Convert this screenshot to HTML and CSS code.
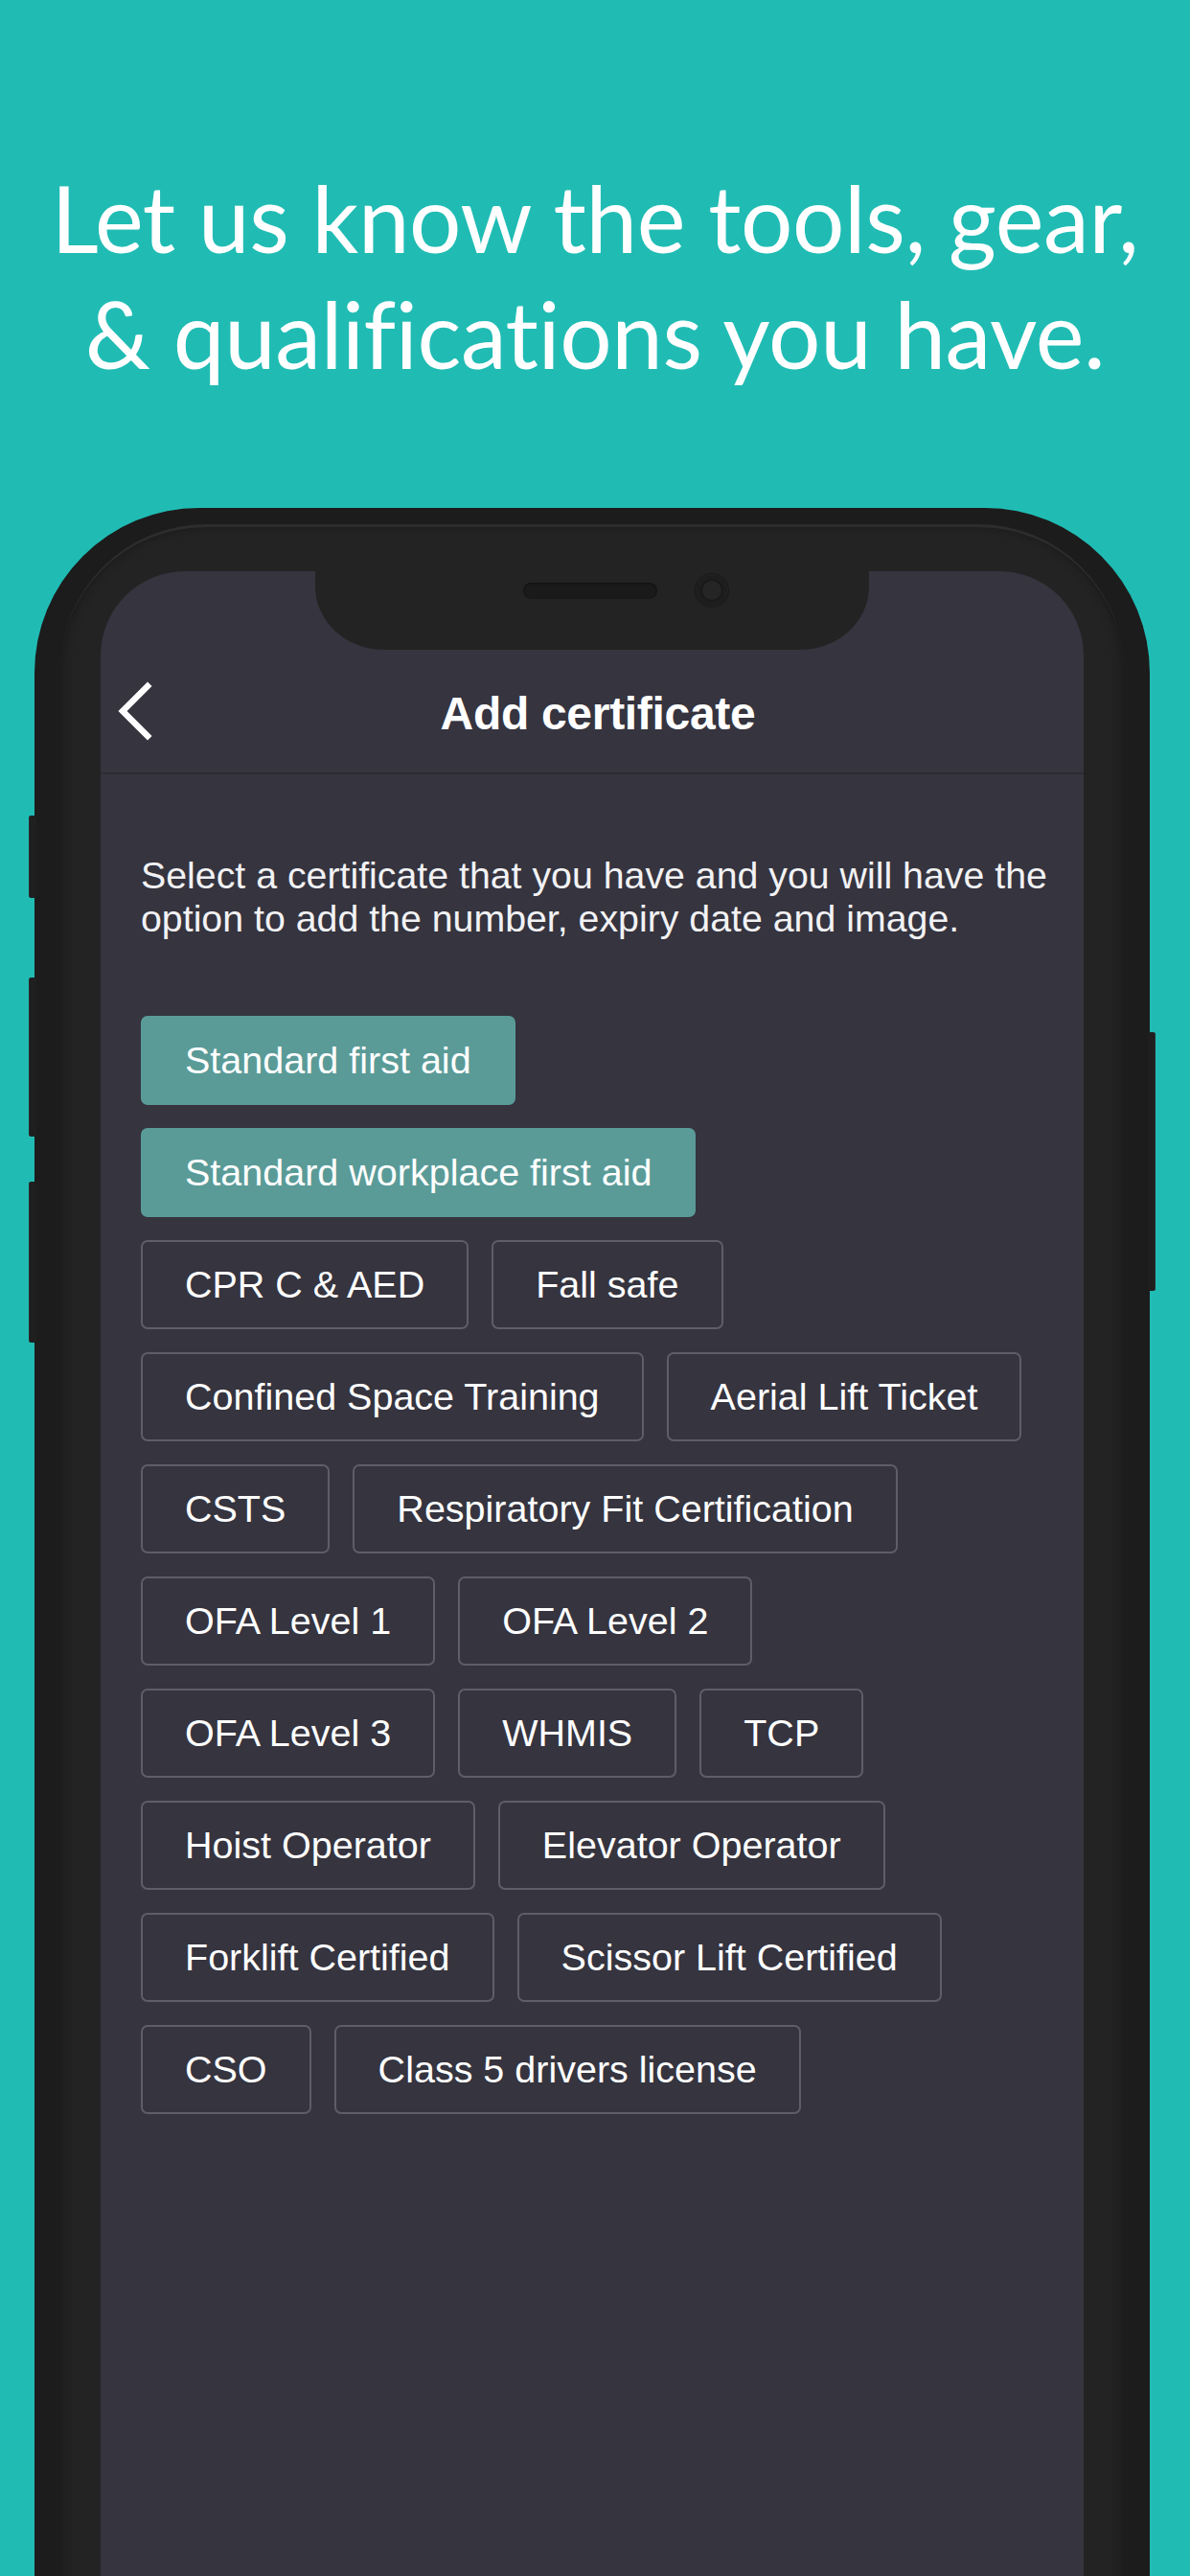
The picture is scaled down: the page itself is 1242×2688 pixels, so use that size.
FILE: index.html
```html
<!DOCTYPE html>
<html lang="en">
<head>
<meta charset="utf-8">
<title>Add certificate</title>
<link rel="stylesheet" href="styles.css">
</head>
<body>
<div class="page">
  <header class="headline">
    <h1>Let us know the tools, gear,<br>&amp; qualifications you have.</h1>
  </header>
  <div class="phone">
    <span class="side-btn btn-mute"></span>
    <span class="side-btn btn-vol-up"></span>
    <span class="side-btn btn-vol-down"></span>
    <span class="side-btn btn-power"></span>
    <div class="bezel">
      <div class="screen">
        <div class="notch">
          <span class="speaker"></span>
          <span class="camera"><span class="lens"></span></span>
        </div>
        <nav class="navbar">
          <svg class="back" width="44" height="64" viewBox="0 0 44 64" aria-hidden="true">
            <path d="M35 6 L9 32 L35 58" fill="none" stroke="#ffffff" stroke-width="6.5" stroke-linecap="square" stroke-linejoin="miter"/>
          </svg>
          <h2 class="title">Add certificate</h2>
        </nav>
        <main class="content">
          <p class="intro">Select a certificate that you have and you will have the option to add the number, expiry date and image.</p>
          <div class="chips">
            <div class="row"><span class="chip selected">Standard first aid</span></div>
            <div class="row"><span class="chip selected">Standard workplace first aid</span></div>
            <div class="row"><span class="chip">CPR C &amp; AED</span><span class="chip">Fall safe</span></div>
            <div class="row"><span class="chip">Confined Space Training</span><span class="chip">Aerial Lift Ticket</span></div>
            <div class="row"><span class="chip">CSTS</span><span class="chip">Respiratory Fit Certification</span></div>
            <div class="row"><span class="chip">OFA Level 1</span><span class="chip">OFA Level 2</span></div>
            <div class="row"><span class="chip">OFA Level 3</span><span class="chip">WHMIS</span><span class="chip">TCP</span></div>
            <div class="row"><span class="chip">Hoist Operator</span><span class="chip">Elevator Operator</span></div>
            <div class="row"><span class="chip">Forklift Certified</span><span class="chip">Scissor Lift Certified</span></div>
            <div class="row"><span class="chip">CSO</span><span class="chip">Class 5 drivers license</span></div>
          </div>
        </main>
      </div>
    </div>
  </div>
</div>
</body>
</html>
```
FILE: styles.css
```css
* { box-sizing: border-box; }
html, body {
  margin: 0;
  padding: 0;
}
body {
  background: #20bcb4;
  width: 1242px;
  height: 2688px;
  overflow: hidden;
}
.page {
  width: 1242px;
  height: 2688px;
  overflow: hidden;
}
.headline {
  height: 530px;
  padding-top: 166px;
}
.headline h1 {
  margin: 0;
  text-align: center;
  color: #ffffff;
  font-family: Lato, "Open Sans", sans-serif;
  font-weight: 400;
  font-size: 96px;
  line-height: 121px;
  letter-spacing: -0.4px;
}
.phone {
  position: relative;
  margin-left: 36px;
  width: 1164px;
  height: 2200px;
  background: #1c1c1c;
  border-radius: 172px 172px 0 0;
  padding: 17px 27px 0;
}
.side-btn {
  position: absolute;
  background: #1f1f1f;
  border-radius: 3px;
  box-shadow: inset 1px 0 0 #2c2c2c;
}
.btn-mute { left: -6px; top: 321px; width: 8px; height: 86px; }
.btn-vol-up { left: -6px; top: 490px; width: 8px; height: 166px; }
.btn-vol-down { left: -6px; top: 703px; width: 8px; height: 168px; }
.btn-power { right: -6px; top: 547px; width: 8px; height: 270px; box-shadow: inset -1px 0 0 #2c2c2c; }
.bezel {
  height: 100%;
  background: #232323;
  border-top: 3px solid #2d2d2d;
  border-radius: 152px 152px 0 0;
  padding: 46px 42px 0;
  box-shadow: inset 6px 0 8px -4px #1a1a1a, inset -6px 0 8px -4px #1a1a1a;
}
.screen {
  position: relative;
  height: 100%;
  background: #35343f;
  border-radius: 88px 88px 0 0;
  font-family: "Liberation Sans", Arial, Helvetica, sans-serif;
  color: #ffffff;
}
.notch {
  position: absolute;
  left: 224px;
  top: 0;
  width: 578px;
  height: 82px;
  background: #232323;
  border-radius: 0 0 72px 72px / 0 0 66px 66px;
  display: flex;
  justify-content: center;
  align-items: center;
  gap: 40px;
  padding: 0 0 42px 70px;
}
.speaker {
  width: 140px;
  height: 17px;
  border-radius: 9px;
  background: #1a1a1a;
  box-shadow: inset 0 1px 2px #101010;
}
.camera {
  width: 34px;
  height: 34px;
  border-radius: 50%;
  background: #1e1e1e;
  box-shadow: 0 0 0 1px #191919, inset 0 0 2px #2a2a2a;
  display: flex;
  align-items: center;
  justify-content: center;
}
.lens {
  width: 20px;
  height: 20px;
  border-radius: 50%;
  background: #252525;
  box-shadow: 0 0 0 2px #1a1a1a;
}
.navbar {
  position: relative;
  padding-top: 120px;
  padding-left: 12px;
  height: 212px;
  border-bottom: 2px solid #2c2b34;
  display: flex;
  justify-content: center;
}
.back {
  position: absolute;
  left: 14px;
  top: 114px;
}
.title {
  margin: 0;
  font-size: 48px;
  line-height: 58px;
  font-weight: 700;
  letter-spacing: -0.3px;
}
.content {
  padding: 83px 42px 0;
}
.intro {
  margin: 0;
  width: 960px;
  font-size: 39.3px;
  line-height: 45px;
  color: #f2f2f4;
}
.chips {
  margin-top: 79px;
  display: flex;
  flex-direction: column;
  gap: 24px;
}
.row {
  display: flex;
  gap: 24px;
}
.chip {
  display: block;
  height: 93px;
  padding: 22px 44px;
  border: 2px solid #5e5d68;
  border-radius: 7px;
  font-size: 39.5px;
  line-height: 45px;
  color: #ffffff;
  white-space: nowrap;
}
.chip.selected {
  background: #5a9b98;
  border-color: #5a9b98;
}
```
